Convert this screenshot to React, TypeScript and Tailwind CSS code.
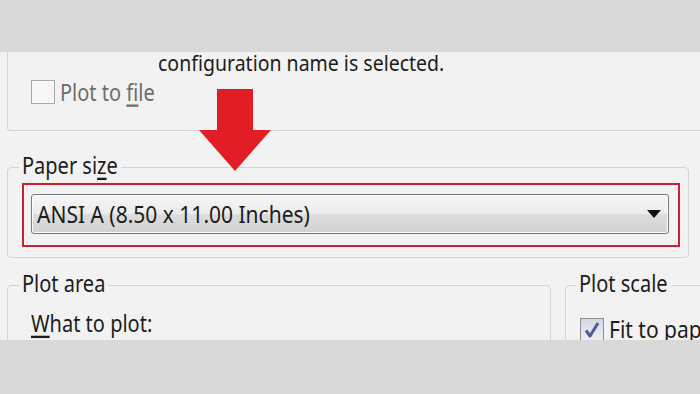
import React from "react";

// the source screenshot is stretched vertically, so text is drawn a bit taller
function T({ children, className = "" }: { children: React.ReactNode; className?: string }) {
  return <span className={"inline-block origin-[50%_75%] scale-y-[1.16] " + className}>{children}</span>;
}

function Checkbox({ checked = false, disabled = false }: { checked?: boolean; disabled?: boolean }) {
  return (
    <span
      className={
        "shrink-0 w-[24px] h-[24px] border flex items-center justify-center " +
        (disabled
          ? "border-[#a8a8a8] bg-[#f6f6f6]"
          : "border-[#8e8f8f] bg-[linear-gradient(to_bottom,#d3d8e2,#eef0f5)]")
      }
    >
      {checked && (
        <svg width="18" height="18" viewBox="0 0 18 18">
          <path d="M3 9.5 L7 15 L15 2" fill="none" stroke="#4b5f92" strokeWidth="3" strokeLinejoin="round" />
        </svg>
      )}
    </span>
  );
}

function RedArrow() {
  return (
    <svg width="74" height="83" viewBox="0 0 74 83" className="absolute left-[198px] top-[37px]">
      <path d="M19 0 H55 V41 H73 L37 82 L1 41 H19 Z" fill="#e31d25" />
    </svg>
  );
}

export default function App() {
  return (
    <div className="w-[700px] h-[394px] flex flex-col bg-[#f2f2f2] text-[#1c1c1c] text-[20px] font-['Noto_Sans',sans-serif] overflow-hidden">
      {/* top band */}
      <div className="h-[52px] shrink-0 bg-[#d9d9d9]" />

      <div className="relative h-[288px] shrink-0 overflow-hidden">
        {/* previous group, top cut off */}
        <div className="ml-[7px] h-[79px] border-l border-b border-[#d4d4d4] rounded-bl-[4px] pl-[23px]">
          <div className="pl-[127px] pt-[1px] leading-[22px] text-[19.5px] whitespace-nowrap">
            <T>configuration name is selected.</T>
          </div>
          <div className="flex items-start h-[24px] mt-[5px] gap-[5px]">
            <Checkbox disabled />
            <span className="leading-[28px] text-[#6d6d6d]">
              <T>
                Plot to <span className="underline underline-offset-[3px]">f</span>ile
              </T>
            </span>
          </div>
        </div>

        {/* Paper size */}
        <fieldset className="mt-[25px] ml-[7px] w-[682px] border border-[#d4d4d4] rounded-[4px] pl-[14px] pr-[8px] pt-[5px] pb-[10px]">
          <legend className="leading-[22px] px-[3px] -ml-[3px]">
            <T>
              Paper si<span className="underline underline-offset-[3px]">z</span>e
            </T>
          </legend>
          <div className="border-2 border-[#c9202f] pl-[7px] pr-[9px] pt-[9px] pb-[11px]">
            <div className="h-[40px] rounded-[3px] border border-[#7a7a7a] shadow-[inset_0_0_0_1px_#fbfbfb] bg-[linear-gradient(to_bottom,#f5f5f5_0%,#ececec_48%,#dddddd_52%,#d2d2d2_100%)] flex items-center pl-[5px] pr-[7px]">
              <span className="flex-1 leading-[40px] pt-[1px] text-[21px] whitespace-nowrap">
                <T>ANSI A (8.50 x 11.00 Inches)</T>
              </span>
              <svg width="14" height="8" viewBox="0 0 14 8">
                <path d="M0 0 H14 L7 8 Z" fill="#111" />
              </svg>
            </div>
          </div>
        </fieldset>

        {/* bottom groups */}
        <div className="flex gap-[14px] mt-[16px] ml-[7px]">
          <fieldset className="w-[544px] h-[100px] shrink-0 border border-[#d4d4d4] rounded-[4px] pl-[14px] pt-[18px]">
            <legend className="leading-[22px] px-[3px] -ml-[3px]">
              <T>Plot area</T>
            </legend>
            <div className="leading-[22px] pl-[9px]">
              <T>
                <span className="underline underline-offset-[3px]">W</span>hat to plot:
              </T>
            </div>
          </fieldset>
          <fieldset className="w-[200px] h-[100px] shrink-0 border border-[#d4d4d4] rounded-[4px] pl-[13px] pt-[22px]">
            <legend className="leading-[22px] px-[3px] -ml-[3px]">
              <T>Plot scale</T>
            </legend>
            <div className="flex items-start gap-[5px] pl-[1px]">
              <Checkbox checked />
              <span className="leading-[24px] text-[21px] whitespace-nowrap">
                <T>Fit to paper</T>
              </span>
            </div>
          </fieldset>
        </div>

        <RedArrow />
      </div>

      {/* bottom band */}
      <div className="flex-1 bg-[#d9d9d9]" />
    </div>
  );
}
